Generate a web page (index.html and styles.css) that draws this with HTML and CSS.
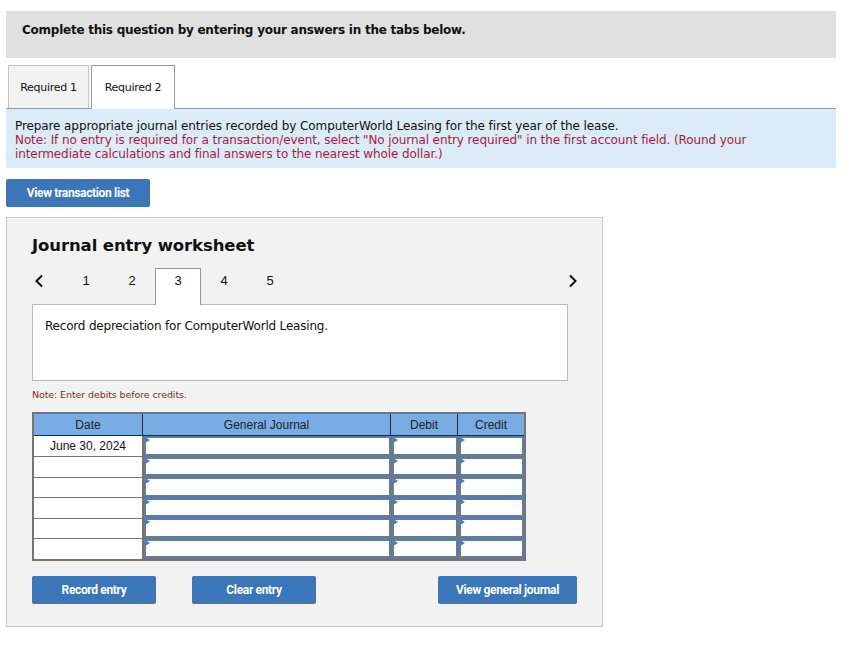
FILE: index.html
```html
<!DOCTYPE html>
<html>
<head>
<meta charset="utf-8">
<link rel="stylesheet" href="styles.css">
</head>
<body>
<div class="page">
  <div class="banner">Complete this question by entering your answers in the tabs below.</div>
  <div class="tabs">
    <div class="tab">Required 1</div>
    <div class="tab active">Required 2</div>
  </div>
  <div class="info">
    <div>Prepare appropriate journal entries recorded by ComputerWorld Leasing for the first year of the lease.</div>
    <div class="red">Note: If no entry is required for a transaction/event, select "No journal entry required" in the first account field. (Round your intermediate calculations and final answers to the nearest whole dollar.)</div>
  </div>
  <button class="btn btn-list">View transaction list</button>
  <div class="panel">
    <h2 class="title">Journal entry worksheet</h2>
    <div class="nav">
      <span class="arrow"><svg width="10" height="14" viewBox="0 0 10 14"><path d="M8 1.5 L2.5 7 L8 12.5" fill="none" stroke="#111" stroke-width="2"/></svg></span>
      <span class="num">1</span>
      <span class="num">2</span>
      <span class="num current">3</span>
      <span class="num">4</span>
      <span class="num">5</span>
      <span class="spacer"></span>
      <span class="arrow right"><svg width="10" height="14" viewBox="0 0 10 14"><path d="M2 1.5 L7.5 7 L2 12.5" fill="none" stroke="#111" stroke-width="2"/></svg></span>
    </div>
    <div class="desc">Record depreciation for ComputerWorld Leasing.</div>
    <div class="note">Note: Enter debits before credits.</div>
    <table class="journal">
      <thead>
        <tr><th class="c-date">Date</th><th class="c-gj">General Journal</th><th class="c-amt">Debit</th><th class="c-amt">Credit</th></tr>
      </thead>
      <tbody>
        <tr><td class="date">June 30, 2024</td><td class="inp"><div class="box"></div></td><td class="inp"><div class="box"></div></td><td class="inp"><div class="box"></div></td></tr>
        <tr><td class="date"></td><td class="inp"><div class="box"></div></td><td class="inp"><div class="box"></div></td><td class="inp"><div class="box"></div></td></tr>
        <tr><td class="date"></td><td class="inp"><div class="box"></div></td><td class="inp"><div class="box"></div></td><td class="inp"><div class="box"></div></td></tr>
        <tr><td class="date"></td><td class="inp"><div class="box"></div></td><td class="inp"><div class="box"></div></td><td class="inp"><div class="box"></div></td></tr>
        <tr><td class="date"></td><td class="inp"><div class="box"></div></td><td class="inp"><div class="box"></div></td><td class="inp"><div class="box"></div></td></tr>
        <tr><td class="date"></td><td class="inp"><div class="box"></div></td><td class="inp"><div class="box"></div></td><td class="inp"><div class="box"></div></td></tr>
      </tbody>
    </table>
    <div class="actions">
      <button class="btn btn-record">Record entry</button>
      <button class="btn btn-clear">Clear entry</button>
      <span class="spacer"></span>
      <button class="btn btn-view">View general journal</button>
    </div>
  </div>
</div>
</body>
</html>
```

FILE: styles.css
```css
body {
  margin: 0;
  background: #fff;
  font-family: "DejaVu Sans", Verdana, sans-serif;
  color: #111;
}
.page {
  width: 830px;
  margin-left: 6px;
  padding-top: 11px;
}
.banner {
  height: 47px;
  box-sizing: border-box;
  background: #e0e0e0;
  padding: 12px 0 0 16px;
  font-weight: bold;
  font-size: 12px;
  line-height: 14px;
  letter-spacing: -0.25px;
}
.tabs {
  margin-top: 7px;
  display: flex;
  gap: 2px;
  padding-left: 2px;
  border-bottom: 1px solid #999;
  height: 43px;
}
.tab {
  width: 81px;
  height: 43px;
  box-sizing: border-box;
  display: flex;
  align-items: center;
  justify-content: center;
  font-size: 11px;
  letter-spacing: -0.3px;
  background: #f2f2f2;
  border: 1px solid #c4c4c4;
  border-bottom: none;
}
.tab.active {
  background: #fff;
  border-color: #999;
  width: 84px;
  height: 44px;
  margin-bottom: -1px;
}
.info {
  background: #dbebf8;
  padding: 10px 9px 7px;
  font-size: 12px;
  line-height: 14px;
  letter-spacing: -0.1px;
}
.red { color: #b5163b; padding-right: 70px; }
.btn {
  border: none;
  border-radius: 2px;
  background: #3a76b8;
  color: #fff;
  font-family: Roboto, "Liberation Sans", sans-serif;
  font-weight: bold;
  font-size: 12px;
  letter-spacing: -0.35px;
  height: 28px;
  padding: 0;
  display: block;
}
.btn-list {
  margin-top: 11px;
  width: 144px;
}
.panel {
  margin-top: 10px;
  width: 597px;
  box-sizing: border-box;
  background: #f2f2f2;
  border: 1px solid #c8c8c8;
  padding: 15px 0 22px 25px;
}
.title {
  margin: 0;
  font-size: 16.5px;
  font-weight: bold;
  line-height: 26px;
  letter-spacing: -0.1px;
}
.nav {
  margin-top: 9px;
  display: flex;
  align-items: stretch;
  height: 36px;
  width: 550px;
  font-family: Arial, "Liberation Sans", sans-serif;
  font-size: 13px;
}
.nav .arrow {
  width: 31px;
  display: flex;
  align-items: flex-start;
  padding: 6px 0 0 2px;
  box-sizing: border-box;
}
.nav .arrow.right {
  width: 18px;
  padding-left: 4px;
}
.nav .num {
  width: 46px;
  display: flex;
  justify-content: center;
  box-sizing: border-box;
  padding-top: 5px;
  line-height: 15px;
}
.nav .current {
  background: #fff;
  border: 1px solid #999;
  border-bottom: none;
  margin-bottom: -1px;
  position: relative;
  z-index: 1;
  height: 37px;
  padding-top: 4px;
}
.spacer { flex: 1; }
.desc {
  width: 536px;
  height: 77px;
  box-sizing: border-box;
  background: #fff;
  border: 1px solid #bbb;
  padding: 13px 12px;
  font-size: 12px;
  line-height: 16px;
  letter-spacing: -0.2px;
}
.note {
  margin-top: 8px;
  font-size: 9.5px;
  color: #8e1d2c;
  letter-spacing: -0.1px;
  line-height: 12px;
}
.journal {
  margin-top: 11px;
  border-collapse: collapse;
  font-family: Arial, "Liberation Sans", sans-serif;
  font-size: 12px;
  border: 2px solid #757575;
}
.journal th {
  background: #78ace3;
  font-weight: normal;
  height: 21px;
  padding: 0;
  border: 1.5px solid #2a2a2a;
  border-top: none;
  color: #222;
}
.c-date { width: 108px; }
.c-gj { width: 247px; }
.c-amt { width: 66px; }
.journal td {
  padding: 0;
  height: 19px;
}
.journal td.date {
  text-align: center;
  background: #fff;
  border: 1.5px solid #757575;
  border-left: none;
  line-height: 16px;
}
.journal td.inp {
  background: #757575;
  padding: 0 0 1px 1px;
}
.box {
  height: 15.5px;
  background: #fff;
  border: 2px solid #5a7fac;
  border-left-color: #6f7c8c;
  position: relative;
}
.box::before {
  content: "";
  position: absolute;
  left: -1px;
  top: -1px;
  border-left: 5px solid #3d7fc8;
  border-top: 3px solid transparent;
  border-bottom: 3px solid transparent;
}
.actions {
  margin-top: 15px;
  display: flex;
  width: 545px;
}
.btn-record { width: 124px; }
.btn-clear { width: 124px; margin-left: 36px; }
.btn-view { width: 139px; }
```
